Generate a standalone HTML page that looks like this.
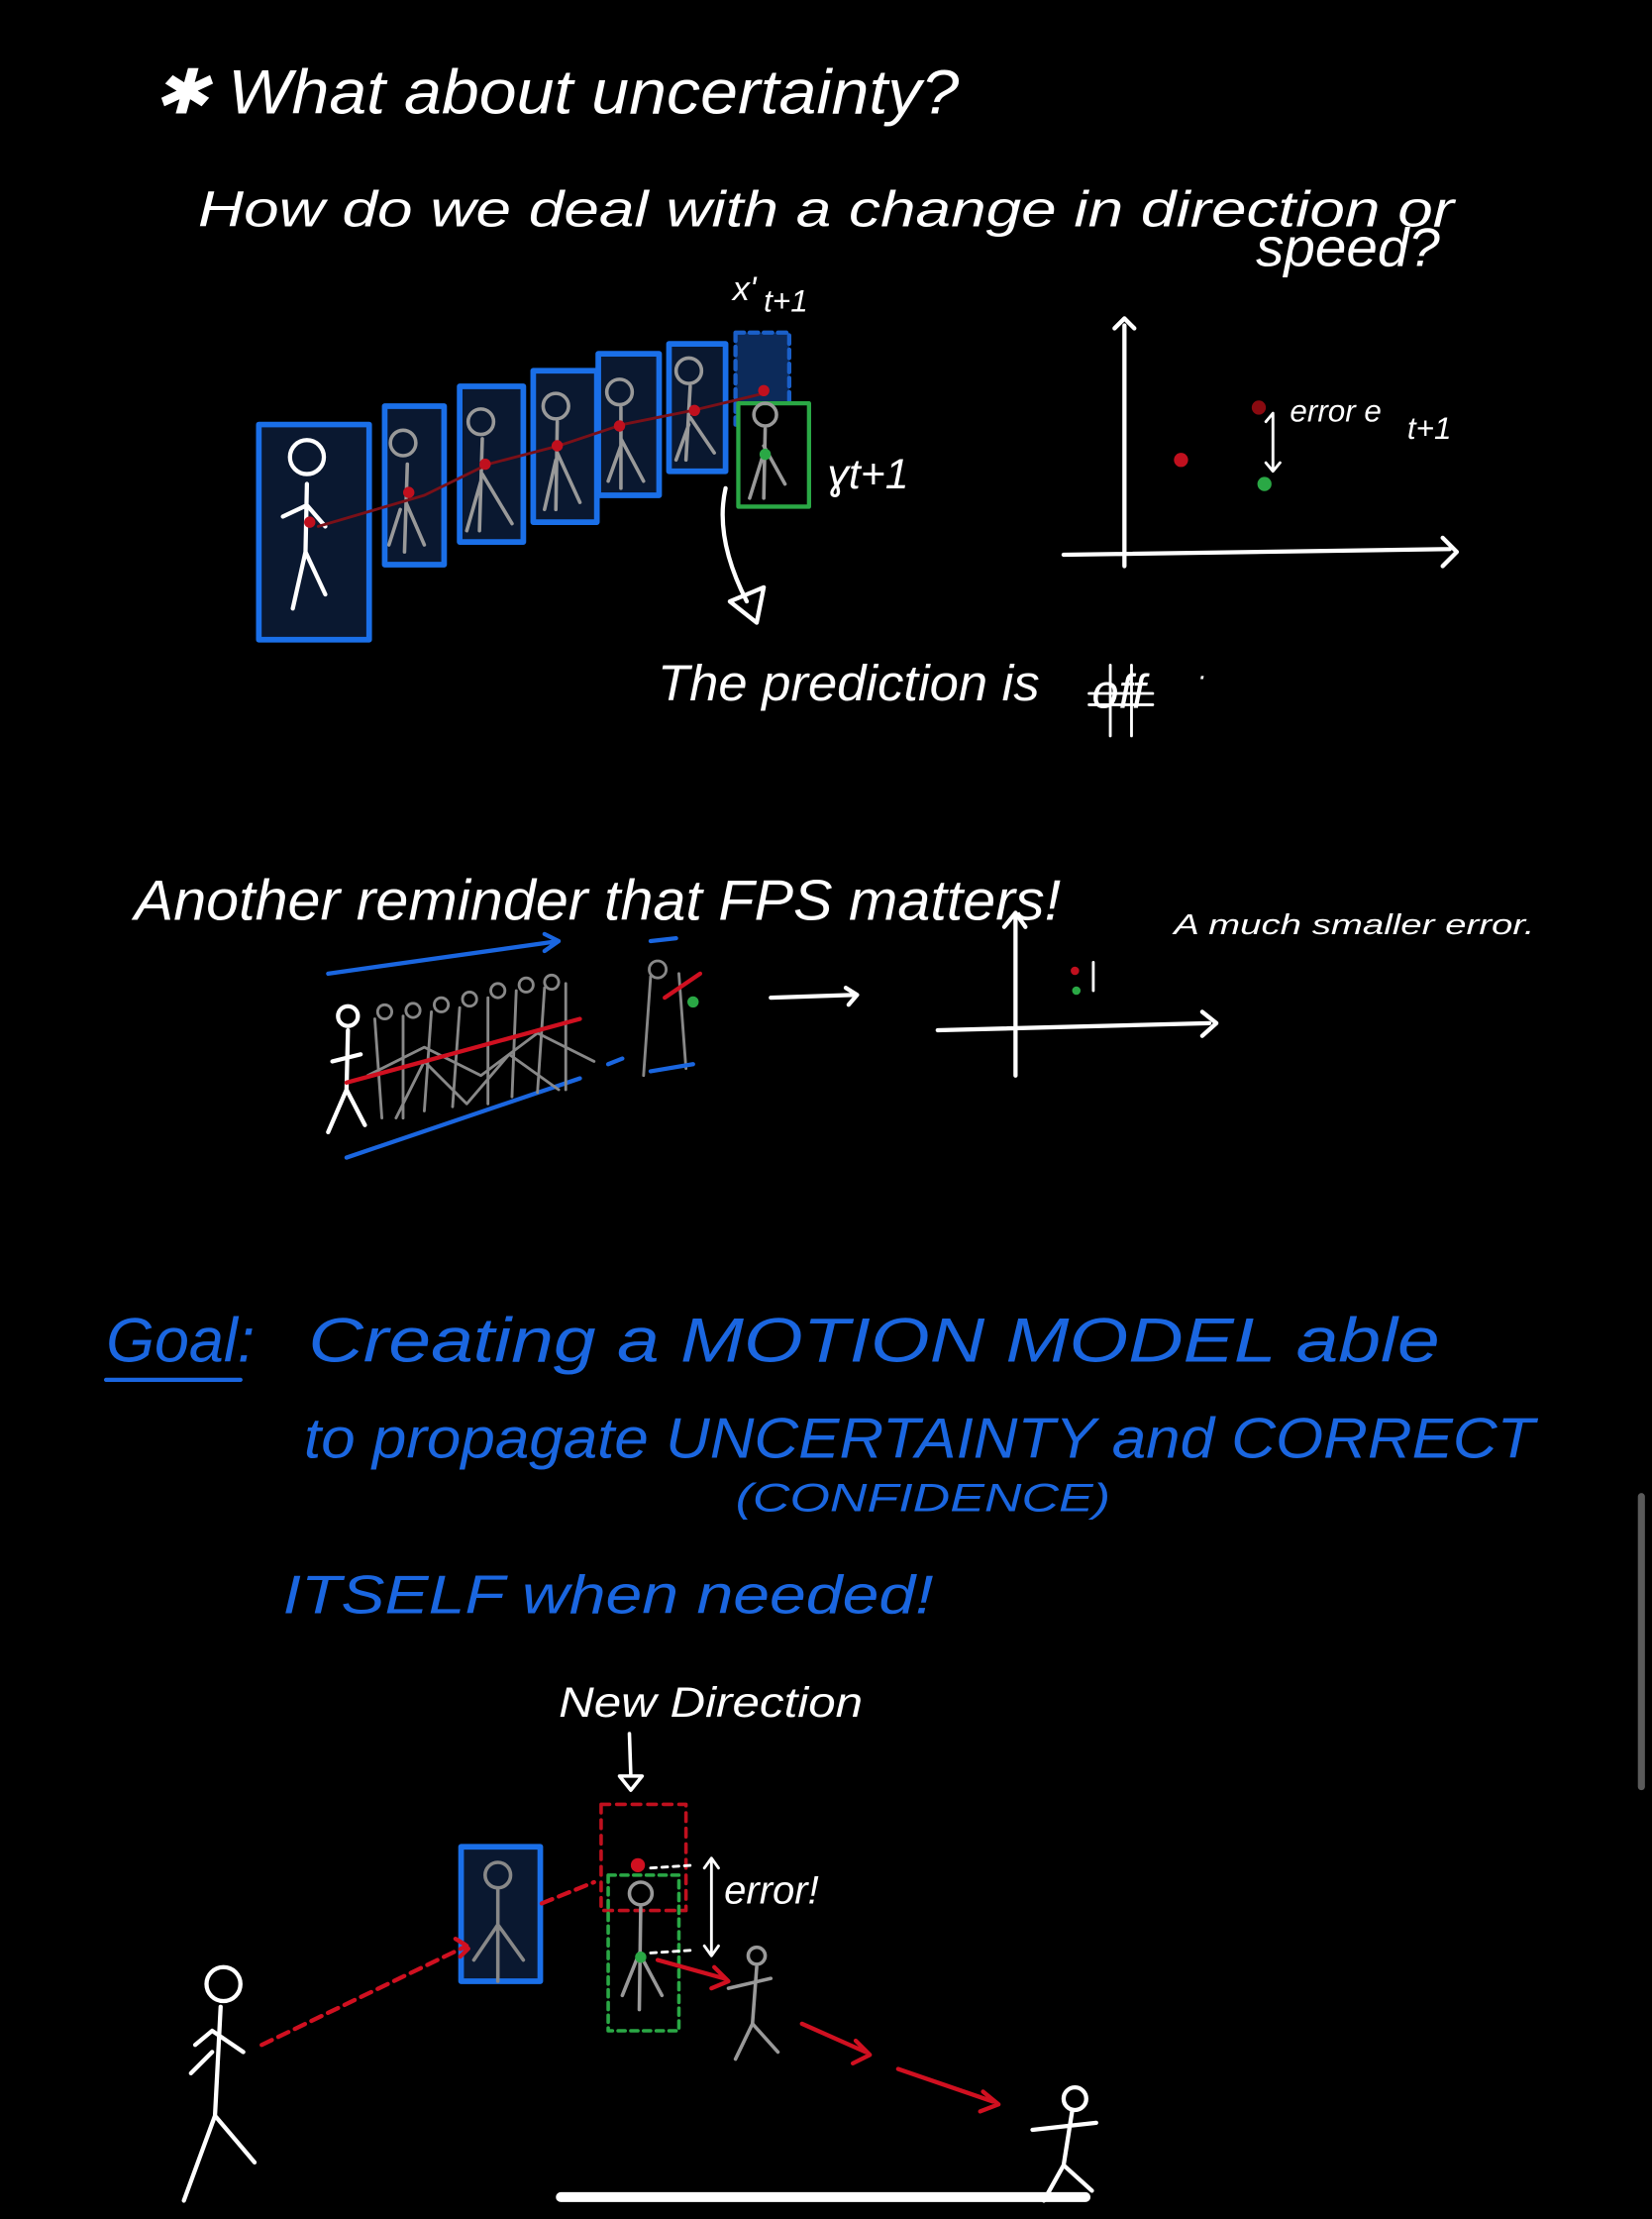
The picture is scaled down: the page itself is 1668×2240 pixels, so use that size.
<!DOCTYPE html>
<html><head><meta charset="utf-8"><style>
html,body{margin:0;padding:0;background:#000;width:1668px;height:2240px;overflow:hidden}
svg{display:block}
text{font-family:"Liberation Sans",sans-serif;font-style:italic}
.w{fill:#fff}.b{fill:#1a66e0}
</style></head><body>
<svg width="1668" height="2240" viewBox="0 0 1168 1568" preserveAspectRatio="none">
<rect width="1168" height="1568" fill="#000"/>
<g stroke-linecap="round" stroke-linejoin="round" fill="none">
<text class="w" x="108" y="80" font-size="44" stroke="none" textLength="570" lengthAdjust="spacingAndGlyphs">✱ What about uncertainty?</text>
<text class="w" x="140" y="160" font-size="36" stroke="none" textLength="888" lengthAdjust="spacingAndGlyphs">How do we deal with a change in direction or</text>
<text class="w" x="888" y="188" font-size="38" stroke="none" textLength="130" lengthAdjust="spacingAndGlyphs">speed?</text>
<text class="w" x="518" y="212" font-size="24" stroke="none">x'</text>
<text class="w" x="540" y="220" font-size="22" stroke="none">t+1</text>
<g stroke="#1a6fe8" stroke-width="4" fill="#0a1830">
<rect x="183" y="300" width="78" height="152"/>
<rect x="272" y="287" width="42" height="112"/>
<rect x="325" y="273" width="45" height="110"/>
<rect x="377" y="262" width="45" height="107"/>
<rect x="423" y="250" width="43" height="100"/>
<rect x="473" y="243" width="40" height="90"/>
</g>
<rect x="520" y="235" width="38" height="65" stroke="#1a5fc8" stroke-width="3" stroke-dasharray="6 4" fill="#0c2a5a"/>
<rect x="522" y="285" width="50" height="73" stroke="#2aa845" stroke-width="3" fill="#000"/>
<g stroke="#fff" stroke-width="3">
<circle cx="217" cy="323" r="12"/><path d="M217 342 L216 390 L207 430 M216 390 L230 420 M200 365 L217 357 L230 372"/>
</g>
<g stroke="#999" stroke-width="2.5">
<circle cx="285" cy="313" r="9"/><path d="M288 328 L286 390 M287 355 L300 385 M283 360 L275 385"/>
<circle cx="340" cy="298" r="9"/><path d="M341 310 L339 375 M341 335 L362 370 M340 340 L330 375"/>
<circle cx="393" cy="287" r="9"/><path d="M394 298 L393 360 M394 320 L410 355 M393 325 L385 360"/>
<circle cx="438" cy="277" r="9"/><path d="M439 288 L439 345 M439 310 L455 340 M439 315 L430 340"/>
<circle cx="487" cy="262" r="9"/><path d="M488 273 L485 325 M488 295 L505 320 M487 300 L478 325"/>
<circle cx="541" cy="293" r="8"/><path d="M541 303 L540 352 M540 315 L555 342 M540 320 L530 352"/>
</g>
<path d="M225 372 L300 350 L345 328 L395 315 L440 300 L490 290 L540 278" stroke="#7a1018" stroke-width="2"/>
<g fill="#c0101e" stroke="none">
<circle cx="219" cy="369" r="4"/><circle cx="289" cy="348" r="4"/><circle cx="343" cy="328" r="4"/><circle cx="394" cy="315" r="4"/><circle cx="438" cy="301" r="4"/><circle cx="491" cy="290" r="4"/><circle cx="540" cy="276" r="4"/>
</g>
<circle cx="541" cy="321" r="4" fill="#2aa845" stroke="none"/>
<text class="w" x="585" y="345" font-size="30" stroke="none">ɣt+1</text>
<path d="M513 345 Q505 380 528 425" stroke="#fff" stroke-width="3"/>
<path d="M516 425 L540 415 L535 440 Z" stroke="#fff" stroke-width="3"/>
<path d="M795 230 L795 400 M788 232 L795 225 L802 232 M752 392 L1025 388 M1020 380 L1030 390 L1020 400" stroke="#fff" stroke-width="3"/>
<circle cx="835" cy="325" r="5" fill="#c0101e" stroke="none"/>
<circle cx="890" cy="288" r="5" fill="#8a0a10" stroke="none"/>
<circle cx="894" cy="342" r="5" fill="#2aa845" stroke="none"/>
<path d="M900 293 L900 332 M895 298 L900 292 M895 327 L900 333 L905 327" stroke="#fff" stroke-width="2"/>
<text class="w" x="912" y="298" font-size="22" stroke="none">error e</text>
<text class="w" x="995" y="310" font-size="22" stroke="none">t+1</text>
<text class="w" x="465" y="495" font-size="36" stroke="none" textLength="270" lengthAdjust="spacingAndGlyphs">The prediction is</text>
<text class="w" x="772" y="500" font-size="34" stroke="none">off</text>
<path d="M770 490 L815 490 M770 498 L815 498 M785 470 L785 520 M800 470 L800 520" stroke="#fff" stroke-width="2"/>
<text class="w" x="848" y="480" font-size="20" stroke="none">.</text>
<text class="w" x="95" y="650" font-size="40" stroke="none" textLength="655" lengthAdjust="spacingAndGlyphs">Another reminder that FPS matters!</text>
<text class="w" x="830" y="660" font-size="20" stroke="none" textLength="255" lengthAdjust="spacingAndGlyphs">A much smaller error.</text>
<path d="M232 688 L395 665 M245 818 L410 762 M385 660 L395 665 L385 672" stroke="#1a66e0" stroke-width="3"/>
<g stroke="#fff" stroke-width="3"><circle cx="246" cy="718" r="7"/><path d="M246 728 L245 770 L232 800 M245 770 L258 795 M235 750 L255 745"/></g>
<g stroke="#888" stroke-width="2">
<path d="M265 720 L270 790 M285 718 L285 790 M305 715 L300 785 M325 712 L320 782 M345 705 L345 780 M365 700 L362 775 M385 698 L380 772 M400 695 L400 770 M460 690 L455 760 M480 688 L485 755 M260 760 L300 740 L340 760 L380 730 L420 750 M280 790 L300 750 L330 780 L360 745 L395 770"/>
<circle cx="272" cy="715" r="5"/><circle cx="292" cy="714" r="5"/><circle cx="312" cy="710" r="5"/><circle cx="332" cy="706" r="5"/><circle cx="352" cy="700" r="5"/><circle cx="372" cy="696" r="5"/><circle cx="390" cy="694" r="5"/><circle cx="465" cy="685" r="6"/>
</g>
<path d="M245 765 L410 720 M470 705 L495 688" stroke="#d01020" stroke-width="3"/>
<path d="M430 752 L440 748 M460 665 L478 663 M460 757 L490 752" stroke="#1a66e0" stroke-width="3"/>
<circle cx="490" cy="708" r="4" fill="#2aa845" stroke="none"/>
<path d="M545 705 L605 703 M598 698 L606 703 L600 710" stroke="#fff" stroke-width="3"/>
<path d="M718 648 L718 760 M710 655 L718 645 L725 655 M663 728 L855 723 M850 715 L860 723 L850 732" stroke="#fff" stroke-width="3"/>
<circle cx="760" cy="686" r="3" fill="#c0101e" stroke="none"/><circle cx="761" cy="700" r="3" fill="#2aa845" stroke="none"/>
<path d="M773 680 L773 700" stroke="#fff" stroke-width="2"/>
<text class="b" x="75" y="962" font-size="44" stroke="none">Goal:</text>
<path d="M75 975 L170 975" stroke="#1a66e0" stroke-width="3"/>
<text class="b" x="218" y="962" font-size="44" stroke="none" textLength="800" lengthAdjust="spacingAndGlyphs">Creating a MOTION MODEL able</text>
<text class="b" x="215" y="1030" font-size="40" stroke="none" textLength="870" lengthAdjust="spacingAndGlyphs">to propagate UNCERTAINTY   and CORRECT</text>
<text class="b" x="520" y="1068" font-size="28" stroke="none" textLength="265" lengthAdjust="spacingAndGlyphs">(CONFIDENCE)</text>
<text class="b" x="200" y="1140" font-size="38" stroke="none" textLength="460" lengthAdjust="spacingAndGlyphs">ITSELF when needed!</text>
<text class="w" x="395" y="1213" font-size="30" stroke="none" textLength="215" lengthAdjust="spacingAndGlyphs">New Direction</text>
<path d="M445 1225 L446 1255 M438 1255 L446 1265 L454 1255 Z" stroke="#fff" stroke-width="2.5"/>
<rect x="326" y="1305" width="56" height="95" stroke="#1a6fe8" stroke-width="4" fill="#0a1830"/>
<g stroke="#888" stroke-width="2.5"><circle cx="352" cy="1325" r="9"/><path d="M352 1335 L352 1400 M352 1360 L370 1385 M352 1360 L335 1385"/></g>
<rect x="425" y="1275" width="60" height="75" stroke="#c0101e" stroke-width="2.5" stroke-dasharray="6 5"/>
<rect x="430" y="1325" width="50" height="110" stroke="#2aa845" stroke-width="2.5" stroke-dasharray="5 4"/>
<g stroke="#999" stroke-width="2.5"><circle cx="453" cy="1338" r="8"/><path d="M453 1348 L452 1420 M452 1380 L440 1410 M452 1380 L468 1410"/></g>
<g stroke="#999" stroke-width="2.5"><circle cx="535" cy="1382" r="6"/><path d="M535 1390 L532 1430 M515 1405 L545 1398 M532 1430 L520 1455 M532 1430 L550 1450"/></g>
<circle cx="451" cy="1318" r="5" fill="#d01020" stroke="none"/>
<circle cx="453" cy="1383" r="4" fill="#2aa845" stroke="none"/>
<path d="M460 1320 L490 1318 M460 1380 L490 1378" stroke="#fff" stroke-width="2" stroke-dasharray="4 4"/>
<path d="M503 1315 L503 1380 M498 1320 L503 1313 L508 1320 M498 1375 L503 1382 L508 1375" stroke="#fff" stroke-width="2"/>
<text class="w" x="512" y="1345" font-size="28" stroke="none">error!</text>
<path d="M465 1385 L512 1398 M505 1390 L515 1400 L503 1405 M567 1430 L612 1450 M605 1442 L615 1452 L603 1458 M635 1462 L702 1485 M695 1478 L706 1487 L693 1492" stroke="#d01020" stroke-width="3"/>
<path d="M185 1445 L330 1375 M322 1370 L332 1376 L324 1384 M383 1345 L420 1330" stroke="#d01020" stroke-width="3" stroke-dasharray="8 5"/>
<g stroke="#fff" stroke-width="3">
<circle cx="158" cy="1402" r="12"/><path d="M156 1418 L152 1495 L130 1555 M152 1495 L180 1528 M138 1445 L150 1435 L172 1450 M135 1465 L150 1450"/>
<circle cx="760" cy="1483" r="8"/><path d="M758 1492 L752 1530 L738 1555 M752 1530 L772 1548 M730 1505 L775 1500"/>
</g>
</g>
<rect x="1158" y="1055" width="5" height="210" rx="2.5" fill="#5a5a5a"/>
<rect x="393" y="1549" width="378" height="7" rx="3.5" fill="#fff"/>
</svg>
</body></html>
